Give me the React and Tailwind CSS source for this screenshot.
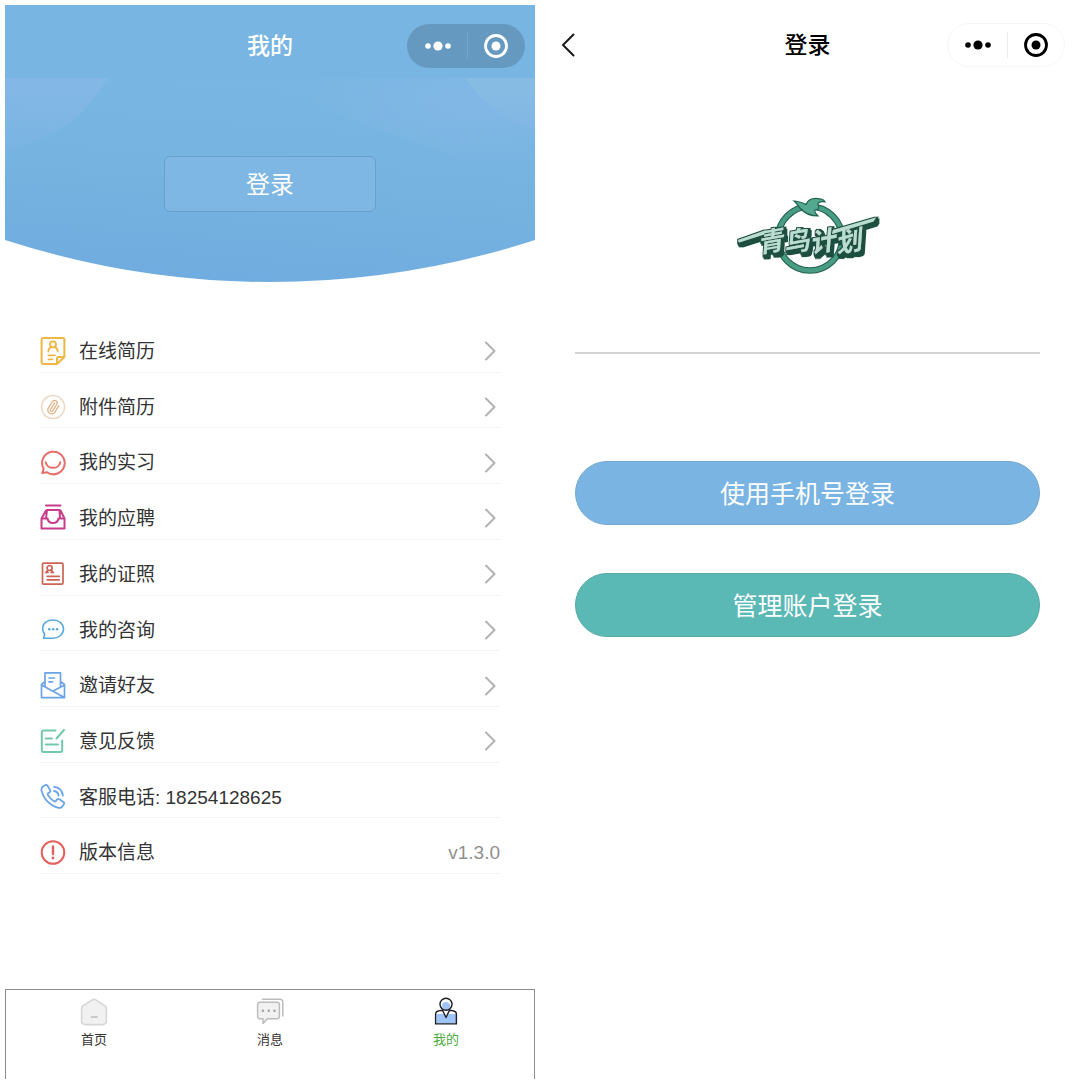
import React from "react";

const FONT = "font-['Liberation_Sans','Noto_Sans_CJK_SC',sans-serif]";

function MenuIcon({ color, width = 2, children }) {
  return (
    <svg
      viewBox="0 0 26 30"
      className="h-[30px] w-[26px] shrink-0"
      fill="none"
      stroke={color}
      strokeWidth={width}
      strokeLinecap="round"
      strokeLinejoin="round"
      aria-hidden="true"
    >
      {children}
    </svg>
  );
}

const ResumeIcon = () => (
  <MenuIcon color="#efb643">
    <path d="M17 28H3a1.4 1.4 0 0 1-1.4-1.4V3.4A1.4 1.4 0 0 1 3 2h20a1.4 1.4 0 0 1 1.4 1.4V21L17 28v-5.6a1.4 1.4 0 0 1 1.4-1.4h6" />
    <circle cx="13" cy="8.300" r="3" strokeWidth="1.800" />
    <path d="M8.300 15.500c0-2.300 1.200-3.800 3-4.400M17.700 15.500c0-2.300-1.200-3.800-3-4.400M8.400 19.300H15M8.400 23.300H12.500" strokeWidth="1.800" />
  </MenuIcon>
);

const ClipIcon = () => (
  <MenuIcon color="#e0b285">
    <circle cx="13" cy="15" r="11.500" stroke="#ecd8c2" strokeWidth="1.500" />
    <path
      transform="rotate(-12 13 15) translate(5.200 7.500) scale(0.640)"
      d="m16 6-8.414 8.586a2 2 0 0 0 2.829 2.829l8.414-8.586a4 4 0 1 0-5.657-5.657l-8.379 8.551a6 6 0 1 0 8.485 8.485l8.379-8.551"
    />
  </MenuIcon>
);

const SmileIcon = () => (
  <MenuIcon color="#e66e69">
    <path d="M3.600 20.600A11.300 11.300 0 1 1 7 24.300L2.300 25l1.300-4.400z" />
    <path d="M5.800 14.300c1 7.400 13.400 7.400 14.400 0" />
  </MenuIcon>
);

const TrayIcon = () => (
  <MenuIcon color="#c83c8c">
    <path d="M6 2.600H20.500M7 7H19.500L20 15.500H18.500C17.500 21.500 8.500 21.500 7.500 15.500H6L7 7zM6 7.500L1.500 15.500V25.500H24.500V15.500L20.500 7.500M1.500 15.500H6.500M20 15.500H24.500" />
  </MenuIcon>
);

const CertificateIcon = () => (
  <MenuIcon color="#cb6453" width={1.7}>
    <rect x="2.500" y="4.200" width="20.500" height="21" rx="1.200" />
    <circle cx="9.600" cy="9" r="2.500" />
    <path d="M7.800 11L6.300 13.500M11.400 11l1.500 2.500M5.700 13.400H8M11.200 13.400h2.200M7.200 17.300H19.300M7.200 20.800H19.300" />
  </MenuIcon>
);

const ConsultIcon = () => (
  <MenuIcon color="#58a9da" width={1.6}>
    <path d="M4.700 19.500C-.5 11.500 5 5 13 5c6 0 10.500 4 10.500 9s-4.500 9.300-10.500 9.300H3.500l1.200-3.800z" />
    <g fill="#58a9da" stroke="none">
      <circle cx="9.300" cy="14.200" r="1.300" />
      <circle cx="13.200" cy="14.200" r="1.300" />
      <circle cx="17.100" cy="14.200" r="1.300" />
    </g>
  </MenuIcon>
);

const InviteIcon = () => (
  <MenuIcon color="#6ba3e6" width={1.7}>
    <path d="M5 15.500V1.800H20.500V15.500M5 10.500l-3.500 3V26.700H24.500V13.500l-4-3M1.500 14L24 26.200M24.300 14.200L13.500 19.800M9 7h5.500M9 10.800h3.500" />
  </MenuIcon>
);

const FeedbackIcon = () => (
  <MenuIcon color="#70c9ad">
    <path d="M15.500 4.500H3.500A1.700 1.700 0 0 0 1.800 6.200V24.300A1.700 1.700 0 0 0 3.500 26H20.500A1.700 1.700 0 0 0 22.200 24.300V14.500M16.500 12.500L24 4M5.800 12.500H12M5.800 18.500H18" />
  </MenuIcon>
);

const PhoneIcon = () => (
  <MenuIcon color="#6aa3e8" width={1.8}>
    <path d="M3 4.600L5 3.300c.9-.6 2-.4 2.500.5l2.600 4.100c.5.900.3 1.800-.5 2.400l-1.500 1c-.5.400-.5.900-.2 1.600 1.300 2.600 3.500 4.900 6.200 6.300.7.400 1.200.4 1.600-.1l1.200-1.500c.7-.8 1.600-.9 2.500-.4l4 2.700c.9.600 1 1.500.4 2.400l-1.500 2.100c-.8 1.200-2 1.700-3.800 1.400C10.300 24 3.500 17.200 1.500 8.400 1.200 6.700 1.600 5.500 3 4.600zM14 4.800c4.900.3 8.500 3.900 8.900 8.800M14 9c2.600.3 4.300 2 4.600 4.600" />
  </MenuIcon>
);

const VersionIcon = () => (
  <MenuIcon color="#e5605c">
    <circle cx="13" cy="14.500" r="11.300" />
    <path d="M13 8.500V16" strokeWidth="2.400" />
    <circle cx="13" cy="20" r="1.400" fill="#e5605c" stroke="none" />
  </MenuIcon>
);

const MENU = [
  { label: "在线简历", icon: ResumeIcon },
  { label: "附件简历", icon: ClipIcon },
  { label: "我的实习", icon: SmileIcon },
  { label: "我的应聘", icon: TrayIcon },
  { label: "我的证照", icon: CertificateIcon },
  { label: "我的咨询", icon: ConsultIcon },
  { label: "邀请好友", icon: InviteIcon },
  { label: "意见反馈", icon: FeedbackIcon },
  { label: "客服电话: 18254128625", icon: PhoneIcon, plain: true },
  { label: "版本信息", icon: VersionIcon, plain: true, value: "v1.3.0" },
];

function Chevron() {
  return (
    <svg
      viewBox="0 0 12 20"
      className="mr-1 ml-auto h-5 w-3"
      fill="none"
      stroke="#b2b2b2"
      strokeWidth="2"
      strokeLinecap="round"
      strokeLinejoin="round"
      aria-hidden="true"
    >
      <path d="M2 1.500L10.500 10L2 18.500" />
    </svg>
  );
}

function Capsule({ className, divider }) {
  return (
    <div className={`flex h-11 w-[118px] items-center justify-self-end rounded-full ${className}`}>
      <button type="button" aria-label="更多" className="flex h-full flex-1 items-center justify-center pl-[2px]">
        <svg viewBox="0 0 26 10" className="h-[10px] w-[26px]" fill="currentColor" aria-hidden="true">
          <circle cx="3" cy="5" r="2.800" />
          <circle cx="13" cy="5" r="4.600" />
          <circle cx="23" cy="5" r="2.800" />
        </svg>
      </button>
      <span className={`h-[26px] w-px ${divider}`} />
      <button type="button" aria-label="关闭" className="flex h-full flex-1 items-center justify-center">
        <svg viewBox="0 0 24 24" className="size-6" fill="none" stroke="currentColor" aria-hidden="true">
          <circle cx="12" cy="12" r="10.500" strokeWidth="2.800" />
          <circle cx="12" cy="12" r="4.500" fill="currentColor" stroke="none" />
        </svg>
      </button>
    </div>
  );
}

function HeroBackground() {
  return (
    <svg
      viewBox="0 0 530 204"
      preserveAspectRatio="none"
      className="absolute inset-0 h-full w-full"
      aria-hidden="true"
    >
      <defs>
        <linearGradient id="hero" x1="0.600" y1="0" x2="0.400" y2="1">
          <stop offset="0" stopColor="#7ab6e3" />
          <stop offset="0.500" stopColor="#76b3e0" />
          <stop offset="1" stopColor="#70acdf" />
        </linearGradient>
        <linearGradient id="haze" x1="0" y1="0" x2="0" y2="1">
          <stop offset="0" stopColor="#8bb9e9" stopOpacity="0.600" />
          <stop offset="1" stopColor="#8bb9e9" stopOpacity="0.150" />
        </linearGradient>
        <radialGradient id="sweep" cx="0.800" cy="0.250" r="0.600">
          <stop offset="0" stopColor="#8bb9e9" stopOpacity="0.450" />
          <stop offset="1" stopColor="#8bb9e9" stopOpacity="0" />
        </radialGradient>
        <linearGradient id="corner" x1="0" y1="0" x2="0" y2="1">
          <stop offset="0" stopColor="#87bde3" />
          <stop offset="1" stopColor="#82b6e5" />
        </linearGradient>
      </defs>
      <path d="M0 0H530V162Q400 204 265 204T0 162z" fill="url(#hero)" />
      <path d="M230 0H530V110Q400 60 230 0z" fill="url(#sweep)" />
      <path d="M0 0H102Q72 58 0 72z" fill="url(#haze)" />
      <path d="M460 0H530V52Q484 36 460 0z" fill="url(#corner)" />
    </svg>
  );
}

function HomeTabIcon() {
  return (
    <svg viewBox="0 0 28 30" className="h-[30px] w-7" fill="none" strokeLinecap="round" strokeLinejoin="round" aria-hidden="true">
      <path
        d="M12.200 3.900a3.400 3.400 0 0 1 3.600 0l9 5.800a3.400 3.400 0 0 1 1.600 2.900V25a3.600 3.600 0 0 1-3.600 3.600H5.200A3.600 3.600 0 0 1 1.600 25V12.600a3.400 3.400 0 0 1 1.600-2.900z"
        fill="#f1f1f1"
        stroke="#d6d6d6"
        strokeWidth="1.600"
      />
      <path d="M11.500 21H17" stroke="#bdbdbd" strokeWidth="1.600" />
    </svg>
  );
}

function MessageTabIcon() {
  return (
    <svg viewBox="0 0 28 30" className="h-[30px] w-7" fill="none" stroke="#bcbcbc" strokeWidth="1.500" strokeLinecap="round" strokeLinejoin="round" aria-hidden="true">
      <path d="M6.500 3.200H24A2.800 2.800 0 0 1 26.800 6V20" />
      <path d="M3.800 6.200H21.200A2.200 2.200 0 0 1 23.400 8.400V20.500A2.200 2.200 0 0 1 21.200 22.700H11.500L7 27.500V22.700H3.800A2.200 2.200 0 0 1 1.600 20.500V8.400A2.200 2.200 0 0 1 3.800 6.200z" fill="#f1f1f1" />
      <g fill="#9f9f9f" stroke="none">
        <circle cx="6.900" cy="14.700" r="1.200" />
        <circle cx="12.700" cy="14.700" r="1.200" />
        <circle cx="18.500" cy="14.700" r="1.200" />
      </g>
    </svg>
  );
}

function MineTabIcon() {
  return (
    <svg viewBox="0 0 28 30" className="h-[30px] w-7" fill="none" stroke="#1e1e24" strokeWidth="1.400" strokeLinecap="round" strokeLinejoin="round" aria-hidden="true">
      <path d="M4.500 18H24V27.500H4.500z" fill="#9fc4f8" stroke="none" />
      <circle cx="14" cy="10" r="4" fill="#9fc4f8" stroke="none" />
      <path d="M9.700 14.300H18.300L14 22z" fill="#ffffff" stroke="none" />
      <circle cx="14" cy="8.300" r="6" />
      <path d="M10.500 14.300L14 21.500L17.500 14.300C22 14.500 24.400 15.500 24.400 18V27.900H3.600V18C3.600 15.500 6 14.500 10.500 14.300z" />
    </svg>
  );
}

const TABS = [
  { label: "首页", icon: HomeTabIcon },
  { label: "消息", icon: MessageTabIcon },
  { label: "我的", icon: MineTabIcon, active: true },
];

function Logo() {
  return (
    <svg viewBox="0 0 145 82" className="h-[82px] w-[145px]" role="img" aria-label="青鸟计划">
      <defs>
        <filter id="extrude" x="-10%" y="-20%" width="125%" height="150%">
          <feMorphology in="SourceAlpha" operator="dilate" radius="1.500" result="grown" />
          <feOffset in="grown" dx="0.500" dy="1" result="near" />
          <feOffset in="grown" dx="2" dy="3" result="far" />
          <feMerge result="shape">
            <feMergeNode in="near" />
            <feMergeNode in="far" />
          </feMerge>
          <feFlood floodColor="#1d4f40" />
          <feComposite in2="shape" operator="in" result="shade" />
          <feMerge>
            <feMergeNode in="shade" />
            <feMergeNode in="SourceGraphic" />
          </feMerge>
        </filter>
      </defs>
      <circle cx="75" cy="43.500" r="32" fill="none" stroke="#23614f" strokeWidth="6.500" />
      <circle cx="75" cy="43.500" r="32" fill="none" stroke="#479c83" strokeWidth="4.300" />
      <path
        d="M59 6C64 6 68 8 71 9.500C73 4 79 2.500 86 4C89 5 90 6 90 7C85 6 82 8 83 10C85 13 83 15 80 15C79 17 81 19 83 21C77 21 70 19 65 13C63 11 62 8 59 6z"
        fill="#52a98f"
        stroke="#23614f"
        strokeWidth="1.200"
      />
      <g filter="url(#extrude)" fill="#b9ded1">
        <path d="M3 45L30 35.500L29 39.500L4 47.500z" />
        <path d="M98 35L141 22.500L138.500 26.500L97 39z" />
        <text
          x="24"
          y="58"
          rotate="-10"
          fontFamily="'Noto Sans CJK SC', sans-serif"
          fontWeight="700"
          fontSize="26"
          fontStyle="italic"
        >
          青鸟计划
        </text>
      </g>
    </svg>
  );
}

function ProfileScreen() {
  return (
    <section className="flex flex-col bg-white">
      <header className="grid h-[73px] grid-cols-[1fr_auto_1fr] items-center bg-[#79b5e2] px-[10px] pt-2 text-white">
        <h1 className="col-start-2 pt-[2px] text-[23px] font-medium">我的</h1>
        <Capsule className="bg-[#6699c0]" divider="bg-[#78a6c9]" />
      </header>

      <div className="relative flex h-[204px] justify-center pt-[78px]">
        <HeroBackground />
        <button
          type="button"
          className="relative h-14 w-[212px] rounded-md border border-[#68a0cb] bg-[#7eb6e4] pt-[2px] text-2xl text-white"
        >
          登录
        </button>
      </div>

      <ul className="mx-[35px] mt-[35px] grid h-[557px] auto-rows-fr">
        {MENU.map(({ label, icon: Icon, plain, value }) => (
          <li key={label} className="border-b border-[#f3f3f3]">
            {plain ? (
              <div className="flex h-full items-center pt-[14px] text-[19px] text-[#333333]">
                <Icon />
                <span className="ml-[13px] pt-[2px]">{label}</span>
                {value && <span className="ml-auto pt-[2px] text-[#8f8f8f]">{value}</span>}
              </div>
            ) : (
              <a href="#" className="flex h-full items-center pt-[14px] text-[19px] text-[#333333]">
                <Icon />
                <span className="ml-[13px] pt-[2px]">{label}</span>
                <Chevron />
              </a>
            )}
          </li>
        ))}
      </ul>

      <nav className="mt-auto grid h-[90px] grid-cols-3 items-start border border-b-0 border-[#8c8c8c] pt-[6px]">
        {TABS.map(({ label, icon: Icon, active }) => (
          <a
            key={label}
            href="#"
            aria-current={active ? "page" : undefined}
            className={`flex flex-col items-center gap-1 text-[13px] leading-5 ${active ? "text-[#4aab3c]" : "text-[#333333]"}`}
          >
            <Icon />
            {label}
          </a>
        ))}
      </nav>
    </section>
  );
}

function LoginScreen() {
  return (
    <section className="flex flex-col bg-white">
      <header className="grid h-[73px] grid-cols-[1fr_auto_1fr] items-center px-[10px] pt-[6px] text-black">
        <button type="button" aria-label="返回" className="justify-self-start pl-[10px]">
          <svg viewBox="0 0 16 24" className="h-6 w-4" fill="none" stroke="#1a1a1a" strokeWidth="2" strokeLinecap="round" strokeLinejoin="round" aria-hidden="true">
            <path d="M13.500 1.500L3 12L13.500 22.500" />
          </svg>
        </button>
        <h1 className="pt-[2px] text-[23px] font-medium">登录</h1>
        <Capsule className="border border-[#f6f6f6] bg-white" divider="bg-[#ececec]" />
      </header>

      <div className="mx-[35px] flex flex-col">
        <div className="mt-[117px] flex justify-center">
          <Logo />
        </div>
        <hr className="mt-[75px] border-t-2 border-[#d2d2d2]" />
        <div className="mt-[107px] flex flex-col gap-12 text-[25px] text-white">
          <button type="button" className="h-16 rounded-full border border-[#72a9d1] bg-[#79b4e2] pt-[3px]">
            使用手机号登录
          </button>
          <button type="button" className="h-16 rounded-full border border-[#55aaa6] bg-[#5ab8b5] pt-[3px]">
            管理账户登录
          </button>
        </div>
      </div>
    </section>
  );
}

export default function App() {
  return (
    <main className={`grid min-h-screen grid-cols-[530fr_535fr] gap-[5px] bg-white p-[5px] ${FONT}`}>
      <ProfileScreen />
      <LoginScreen />
    </main>
  );
}
